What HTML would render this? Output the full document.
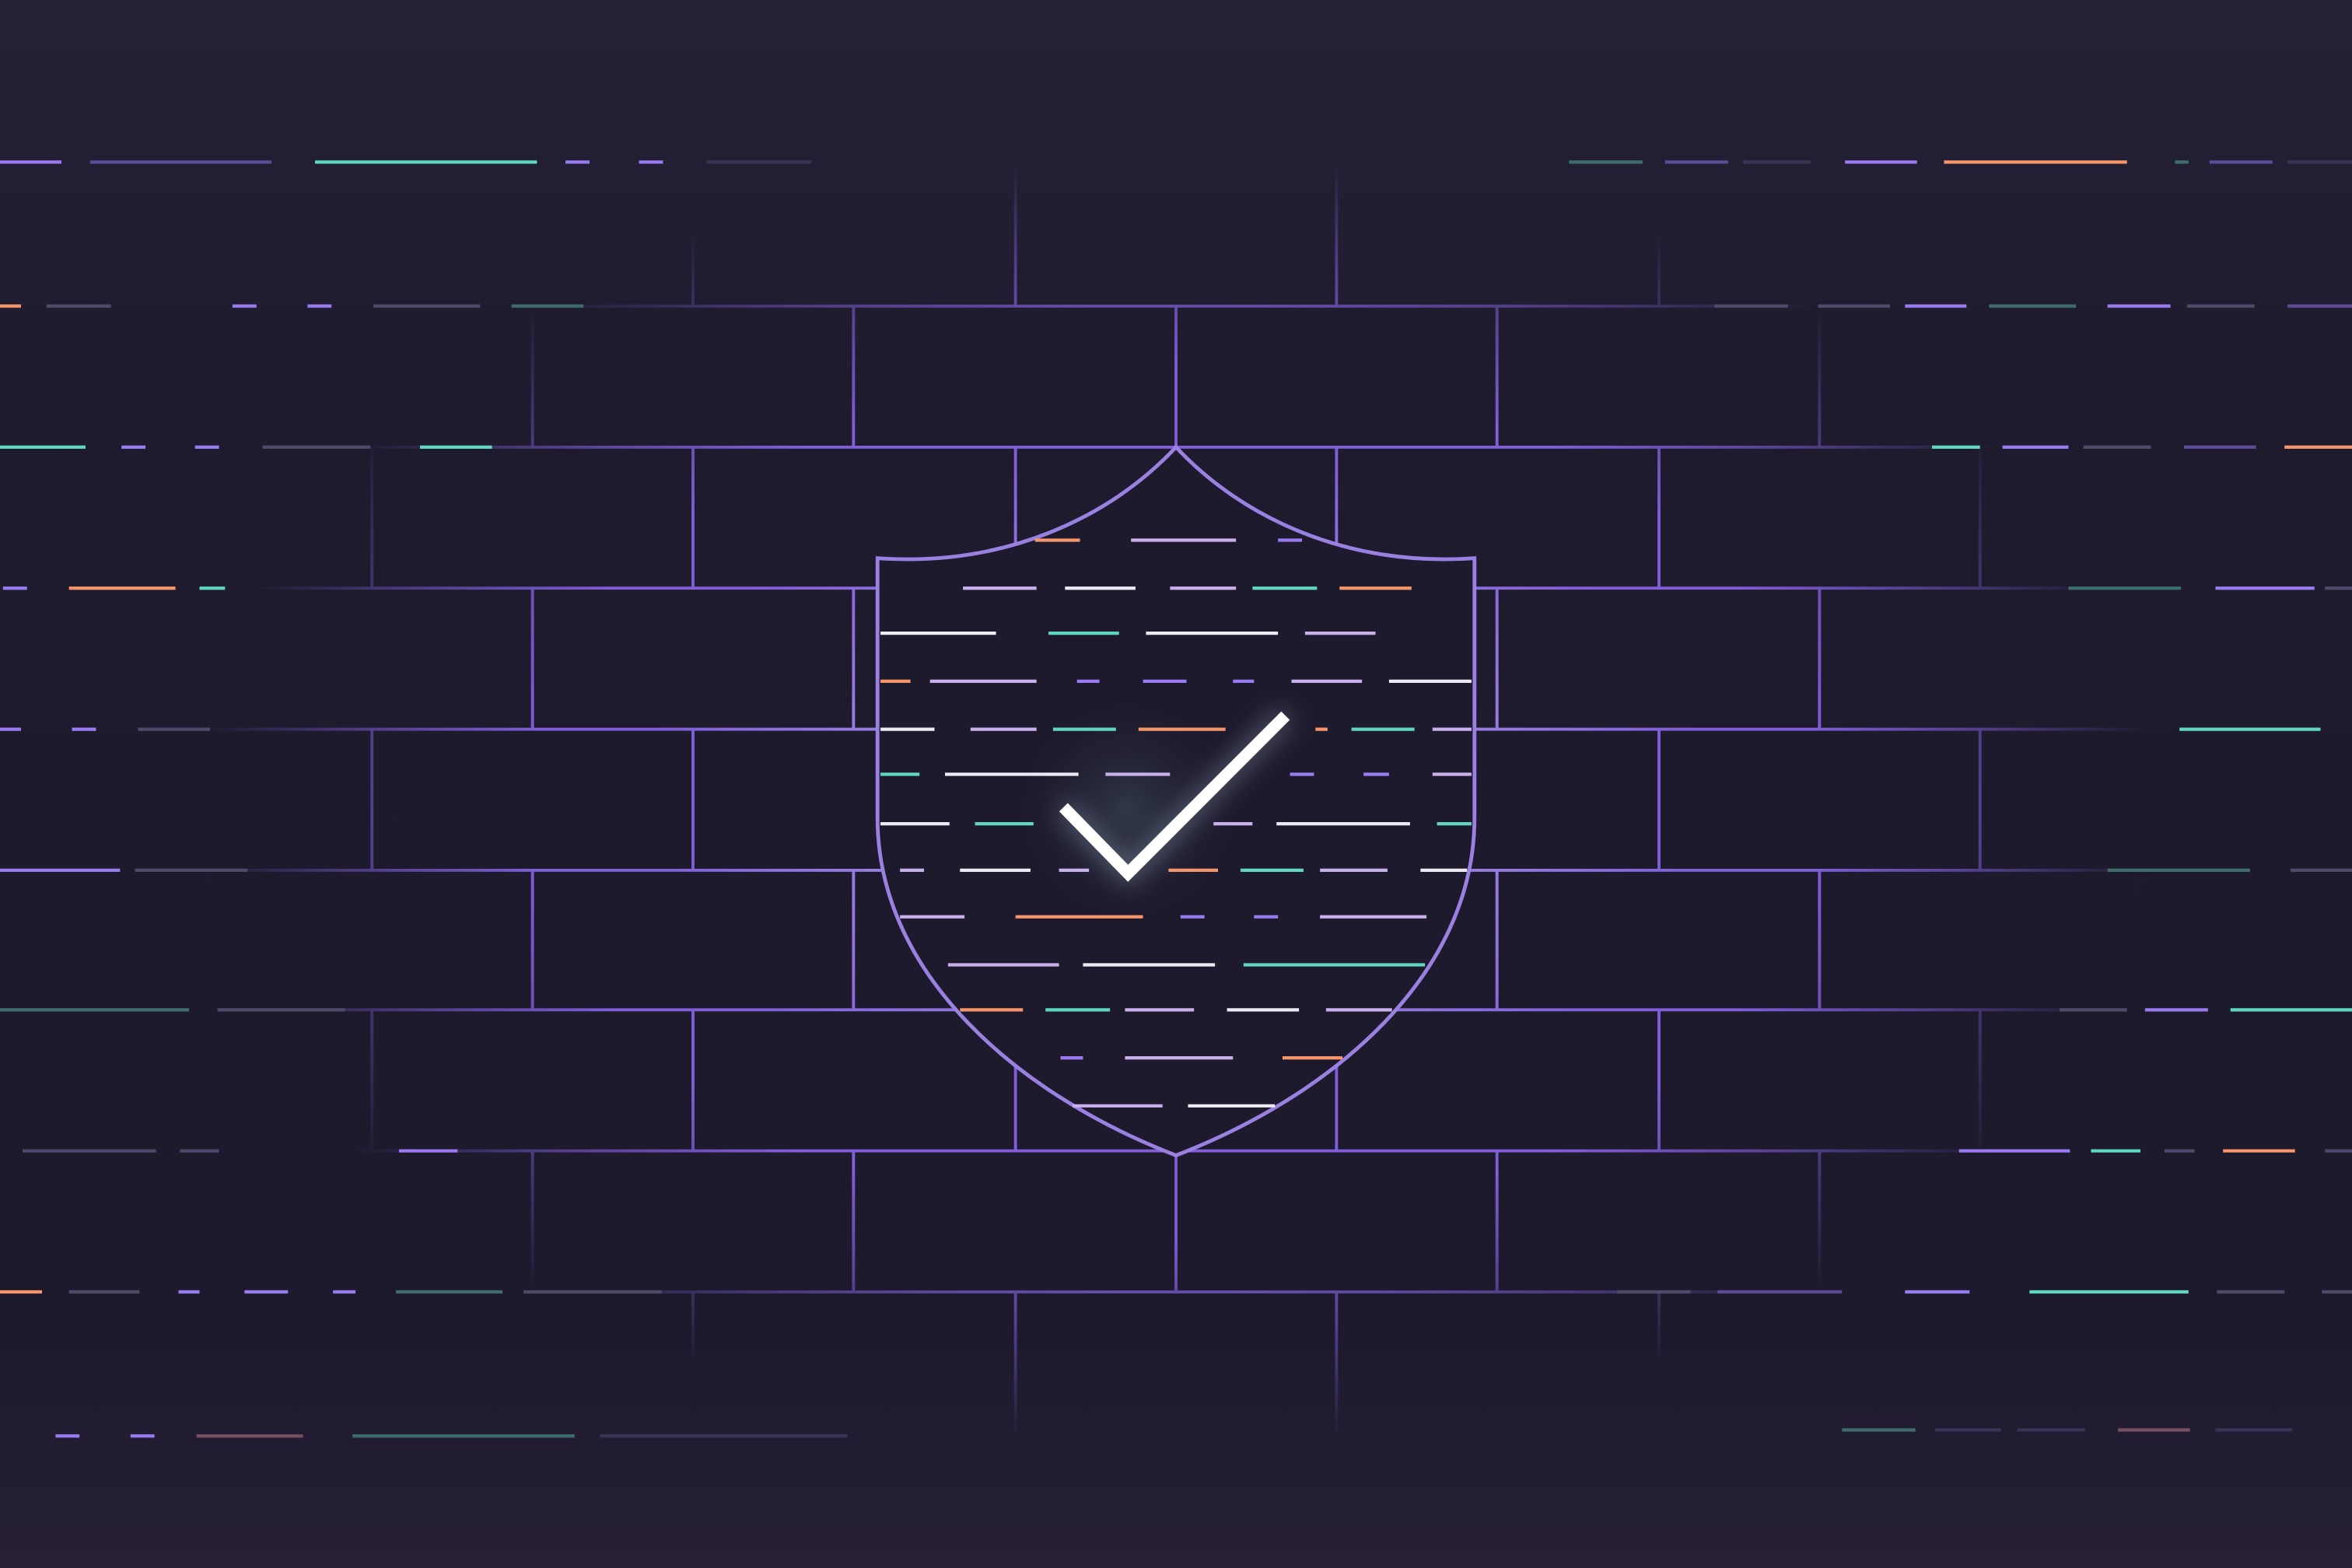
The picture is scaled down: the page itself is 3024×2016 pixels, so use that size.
<!DOCTYPE html>
<html><head><meta charset="utf-8"><style>
html,body{margin:0;padding:0;background:#1e1a2e;}
svg{display:block;}
</style></head><body>
<svg width="3024" height="2016" viewBox="0 0 1568 1045" preserveAspectRatio="none" xmlns="http://www.w3.org/2000/svg">
<defs>
<linearGradient id="bg" x1="0" y1="0" x2="0" y2="1">
<stop offset="0" stop-color="#242136"/><stop offset="0.25" stop-color="#1f1b2f"/><stop offset="0.85" stop-color="#1e1a2e"/><stop offset="1" stop-color="#261f36"/>
</linearGradient>
<radialGradient id="fade" cx="0.5" cy="0.51" r="0.5">
<stop offset="0" stop-color="#fff"/><stop offset="0.55" stop-color="#fff"/><stop offset="0.7" stop-color="#fff" stop-opacity="0.5"/><stop offset="0.83" stop-color="#fff" stop-opacity="0"/>
</radialGradient>
<radialGradient id="fade2" cx="0.5" cy="0.51" r="0.5">
<stop offset="0" stop-color="#fff" stop-opacity="0.8"/><stop offset="0.3" stop-color="#fff" stop-opacity="0.3"/><stop offset="0.45" stop-color="#fff" stop-opacity="0"/>
</radialGradient>
<mask id="m"><rect width="1568" height="1045" fill="url(#fade)"/></mask>
<mask id="m2"><rect width="1568" height="1045" fill="url(#fade2)"/></mask>
<radialGradient id="glow" cx="752" cy="540" r="80" gradientUnits="userSpaceOnUse">
<stop offset="0" stop-color="#34404f" stop-opacity="0.8"/><stop offset="1" stop-color="#1e1a2e" stop-opacity="0"/>
</radialGradient>
<filter id="bl" x="-50%" y="-50%" width="200%" height="200%"><feGaussianBlur stdDeviation="8"/></filter>
</defs>
<rect width="1568" height="1045" fill="url(#bg)"/>
<g id="grid" mask="url(#m)" stroke="#7f5ed8" stroke-width="2" fill="none">
<path d="M0 204H1568M0 298H1568M0 392H1568M0 486H1568M0 580H1568M0 673H1568M0 767H1568M0 861H1568"/>
<path d="M462 110V204M677 110V204M891 110V204M1106 110V204
M355 204V298M569 204V298M784 204V298M998 204V298M1213 204V298
M248 298V392M462 298V392M677 298V392M891 298V392M1106 298V392M1320 298V392
M140 392V486M355 392V486M569 392V486M784 392V486M998 392V486M1213 392V486M1427 392V486
M248 486V580M462 486V580M677 486V580M891 486V580M1106 486V580M1320 486V580
M140 580V673M355 580V673M569 580V673M784 580V673M998 580V673M1213 580V673M1427 580V673
M248 673V767M462 673V767M677 673V767M891 673V767M1106 673V767M1320 673V767
M355 767V861M569 767V861M784 767V861M998 767V861M1213 767V861
M462 861V955M677 861V955M891 861V955M1106 861V955"/>
</g>
<g mask="url(#m2)" stroke="#c8b8f0" stroke-width="2" fill="none">
<path d="M0 298H1568M0 392H1568M0 486H1568M0 580H1568M0 673H1568"/>
<path d="M677 298V392M891 298V392M569 392V486M998 392V486M569 580V673M998 580V673M784 204V298"/>
</g>
<g stroke-width="2.2" fill="none">
<path stroke="#9a7af0" d="M0 108H41M377 108H393M426 108H442M155 204H171M205 204H221M81 298H97M130 298H146M2 392H18M0 486H14M48 486H64M0 580H80M266 767H305M119 861H133M163 861H192M222 861H237M1230 108H1278M1270 204H1311M1405 204H1447M1335 298H1379M1477 392H1543M1430 673H1472M1306 767H1380M1270 861H1313M37 957H53M87 957H103"/>
<path stroke="#5d4b9a" d="M60 108H181M1110 108H1152M1456 298H1504M1525 204H1568M1145 861H1228M1473 108H1515"/>
<path stroke="#3a3356" d="M471 108H541M1162 108H1207M1525 108H1568M400 957H565M1290 953H1334M1345 953H1390M1477 953H1528"/>
<path stroke="#5fd6c0" d="M210 108H358M0 298H57M280 298H328M133 392H150M1453 486H1547M1487 673H1568M1394 767H1427M1353 861H1459M1288 298H1320"/>
<path stroke="#3d6e6c" d="M341 204H389M1046 108H1095M1450 108H1459M1326 204H1384M1379 392H1454M1405 580H1500M0 673H126M264 861H335M235 957H383M1228 953H1277"/>
<path stroke="#f5956a" d="M1296 108H1418M0 204H14M1523 298H1568M46 392H117M1482 767H1530M0 861H28"/>
<path stroke="#7a4f60" d="M131 957H202M1412 953H1460"/>
<path stroke="#4f4a6a" d="M31 204H74M249 204H320M1143 204H1192M1212 204H1260M1458 204H1503M175 298H247M1389 298H1434M92 486H140M90 580H165M1527 580H1568M145 673H230M1373 673H1418M15 767H104M120 767H146M1443 767H1463M1550 767H1568M46 861H93M349 861H441M1078 861H1127M1478 861H1523M1548 861H1568M1550 392H1568"/>
</g>
<path d="M784 298C740 345 670 378 585 372L585 545C585 650 680 730 784 770C888 730 983 650 983 545L983 372C898 378 828 345 784 298Z" fill="#1e1a2e" stroke="#9a80e0" stroke-width="2.5"/>
<circle cx="752" cy="540" r="80" fill="url(#glow)"/>
<g stroke-width="2.2" fill="none">
<path stroke="#c9b0ec" d="M754 360H824M642 392H691M780 392H824M870 422H917M620 454H691M861 454H908M647 486H691M955 486H981M737 516H780M955 516H981M809 549H835M600 580H616M706 580H726M880 580H925M600 611H643M880 611H951M632 643H706M750 673H796M884 673H928M750 705H822M715 737H775"/>
<path stroke="#eeeaf4" d="M710 392H757M587 422H664M764 422H852M926 454H981M587 486H623M630 516H719M587 549H633M851 549H940M640 580H687M947 580H978M722 643H810M818 673H866M792 737H850"/>
<path stroke="#5fd6c0" d="M835 392H878M699 422H746M702 486H744M901 486H943M587 516H613M650 549H689M958 549H981M827 580H869M829 643H950M697 673H740"/>
<path stroke="#f5956a" d="M690 360H720M893 392H941M587 454H607M759 486H817M877 486H885M779 580H812M677 611H762M640 673H682M855 705H895"/>
<path stroke="#9a7af0" d="M852 360H868M718 454H733M762 454H791M822 454H836M860 516H876M909 516H926M787 611H803M836 611H852M707 705H722"/>
</g>
<path d="M709 538L752 582L857 477" fill="none" stroke="#9fb0c8" stroke-opacity="0.5" stroke-width="10" filter="url(#bl)"/>
<path d="M709 538L752 582L857 477" fill="none" stroke="#fff" stroke-width="8"/>
</svg>
</body></html>
